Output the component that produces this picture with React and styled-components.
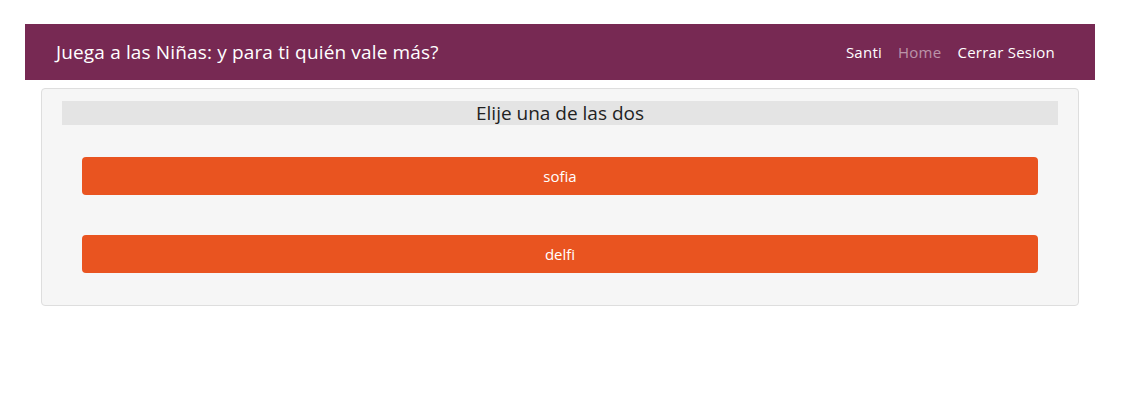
import React from "react";
import styled, { createGlobalStyle } from "styled-components";

const Global = createGlobalStyle`
  html, body { margin: 0; padding: 0; background: #fff; }
  body { font-family: "Open Sans", "Noto Sans", sans-serif; color: #333; }
  * { box-sizing: border-box; }
`;

const Page = styled.div`
  padding: 24px 53px 0 25px;
`;

const Navbar = styled.nav`
  height: 56px;
  background: #772953;
  display: flex;
  align-items: center;
  justify-content: space-between;
  padding: 0 40px 0 31px;
`;

const Brand = styled.div`
  color: #fff;
  font-size: 19px;
  letter-spacing: 0.15px;
`;

const NavLinks = styled.div`
  display: flex;
  align-items: center;
  gap: 16px;
`;

const NavLink = styled.a`
  color: ${(p) => (p.$muted ? "rgba(255,255,255,0.5)" : "#fff")};
  font-size: 15px;
  text-decoration: none;
  letter-spacing: 0.25px;
`;

const Well = styled.div`
  margin: 8px 16px 0 16px;
  background: #f6f6f6;
  border: 1px solid #dedede;
  border-radius: 4px;
  padding: 12px 20px 32px;
`;

const Heading = styled.div`
  background: #e4e4e4;
  height: 24px;
  line-height: 24px;
  text-align: center;
  font-size: 19px;
  color: #222;
`;

const Choices = styled.div`
  display: flex;
  flex-direction: column;
  gap: 40px;
  padding: 32px 20px 0;
`;

const Choice = styled.button`
  height: 38px;
  border: none;
  border-radius: 4px;
  background: #e95420;
  color: #fff;
  font-family: inherit;
  font-size: 15px;
  cursor: pointer;
`;

export default function App() {
  return (
    <>
      <Global />
      <Page>
        <Navbar>
          <Brand>Juega a las Niñas: y para ti quién vale más?</Brand>
          <NavLinks>
            <NavLink>Santi</NavLink>
            <NavLink $muted>Home</NavLink>
            <NavLink>Cerrar Sesion</NavLink>
          </NavLinks>
        </Navbar>
        <Well>
          <Heading>Elije una de las dos</Heading>
          <Choices>
            <Choice>sofia</Choice>
            <Choice>delfi</Choice>
          </Choices>
        </Well>
      </Page>
    </>
  );
}
